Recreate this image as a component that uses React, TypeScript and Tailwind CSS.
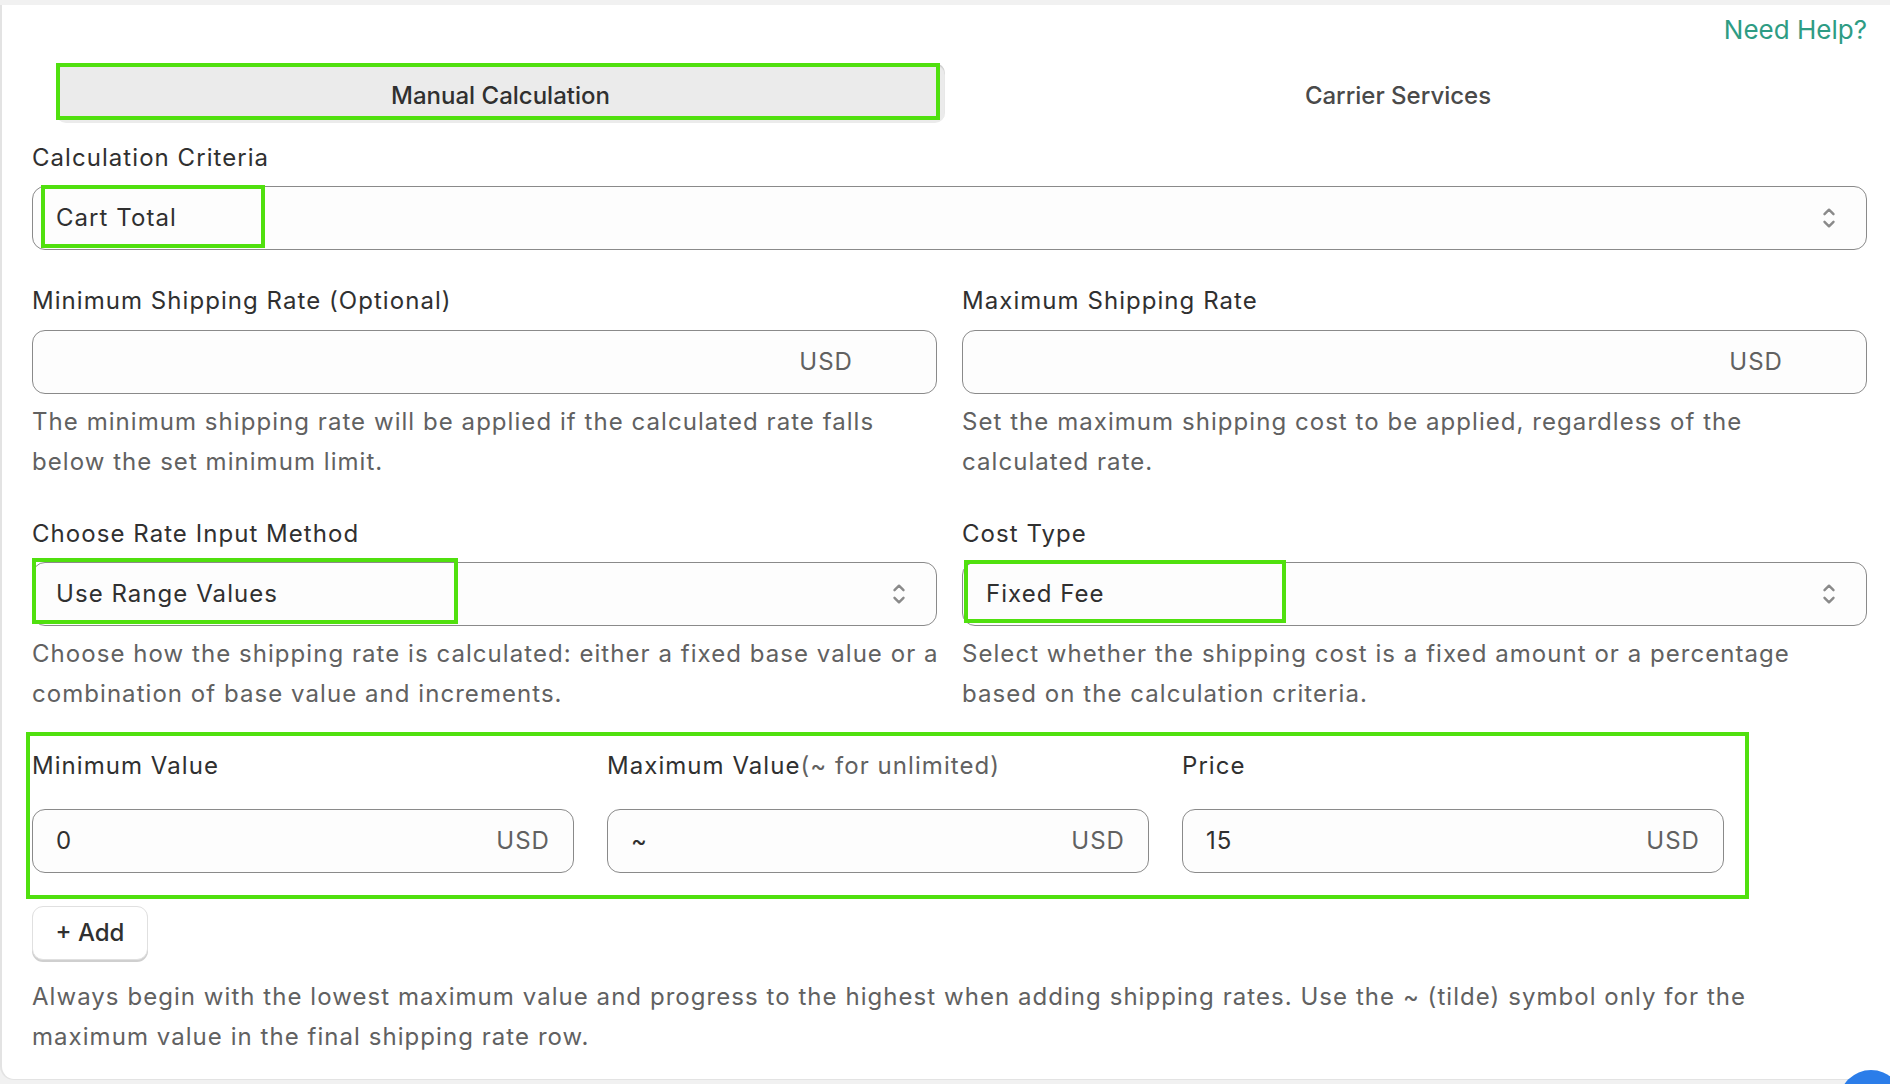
import { ReactNode } from "react";

function Chevrons() {
  return (
    <svg width="14" height="26" viewBox="0 0 14 26" fill="none" className="shrink-0">
      <path d="M2.5 9.2 L7 4.7 L11.5 9.2" stroke="#8a8a8a" strokeWidth="2.4" strokeLinecap="round" strokeLinejoin="round" />
      <path d="M2.5 16.8 L7 21.3 L11.5 16.8" stroke="#8a8a8a" strokeWidth="2.4" strokeLinecap="round" strokeLinejoin="round" />
    </svg>
  );
}

function Label({ children }: { children: ReactNode }) {
  return <p className="text-[24px] leading-[32px] tracking-[1.05px] text-[#303030]">{children}</p>;
}

function Help({ children }: { children: ReactNode }) {
  return <p className="mt-[8px] text-[24px] leading-[40px] tracking-[1.05px] text-[#616161]">{children}</p>;
}

function SelectBox({ value, mark }: { value: string; mark: string }) {
  return (
    <div className="relative mt-[12px] flex h-[64px] items-center justify-between rounded-[13px] border border-[#8a8a8a] bg-[#fdfdfd] pl-[23px] pr-[30px]">
      <span className="text-[24px] tracking-[1.05px] text-[#303030]">{value}</span>
      <Chevrons />
      {/* highlight box */}
      <div className={`pointer-events-none absolute border-4 border-[#50e00e] ${mark}`} />
    </div>
  );
}

function UsdInput({ value, wide }: { value?: string; wide?: boolean }) {
  return (
    <div
      className={`flex h-[64px] items-center justify-between rounded-[13px] border border-[#8a8a8a] bg-[#fdfdfd] pl-[23px] ${
        wide ? "mt-[13px] pr-[83px]" : "pr-[23px]"
      }`}
    >
      <span className="text-[24px] tracking-[1.05px] text-[#303030]">{value}</span>
      <span className="text-[24px] tracking-[1.05px] text-[#616161]">USD</span>
    </div>
  );
}

export default function App() {
  return (
    <div className="relative h-[1084px] overflow-hidden bg-[#f1f1f1] pt-[5px] font-['Inter',sans-serif]">
      <div className="h-[1075px] rounded-bl-[14px] border-b border-l-2 border-[#e3e3e3] bg-white pl-[30px] pr-[23px]">
        <div className="flex justify-end pt-[9px]">
          <a className="text-[26px] leading-[32px] text-[#2e9c84]">Need Help?</a>
        </div>

        <div className="mt-[17px] ml-[24px] mr-[16px] flex h-[60px]">
          <div className="relative flex w-[889px] items-center justify-center rounded-[10px] bg-[#ebebeb] pt-[5px] shadow-[inset_0_2px_1px_rgba(0,0,0,0.12)]">
            <span className="text-[24px] font-medium text-[#303030]">Manual Calculation</span>
            <div className="pointer-events-none absolute left-0 top-0 h-[57px] w-[884px] border-4 border-[#50e00e]" />
          </div>
          <div className="flex flex-1 items-center justify-center pt-[5px]">
            <span className="text-[24px] font-medium text-[#4a4a4a]">Carrier Services</span>
          </div>
        </div>

        <div className="mt-[19px]">
          <Label>Calculation Criteria</Label>
          <SelectBox value="Cart Total" mark="left-[8px] top-[-2px] h-[63px] w-[224px]" />
        </div>

        <div className="mt-[35px] grid grid-cols-2 gap-x-[25px]">
          <div>
            <Label>Minimum Shipping Rate (Optional)</Label>
            <UsdInput wide />
            <Help>
              The minimum shipping rate will be applied if the calculated rate falls
              <br />
              below the set minimum limit.
            </Help>
          </div>
          <div>
            <Label>Maximum Shipping Rate</Label>
            <UsdInput wide />
            <Help>
              Set the maximum shipping cost to be applied, regardless of the
              <br />
              calculated rate.
            </Help>
          </div>
        </div>

        <div className="mt-[36px] grid grid-cols-2 gap-x-[25px]">
          <div>
            <Label>Choose Rate Input Method</Label>
            <SelectBox value="Use Range Values" mark="left-[-1px] top-[-5px] h-[66px] w-[426px]" />
            <Help>
              <span className="whitespace-nowrap">
                Choose how the shipping rate is calculated: either a fixed base value or a
              </span>
              <br />
              combination of base value and increments.
            </Help>
          </div>
          <div>
            <Label>Cost Type</Label>
            <SelectBox value="Fixed Fee" mark="left-[1px] top-[-3px] h-[63px] w-[322px]" />
            <Help>
              Select whether the shipping cost is a fixed amount or a percentage
              <br />
              based on the calculation criteria.
            </Help>
          </div>
        </div>

        <div className="mt-[18px] -ml-[6px] w-[1723px] border-4 border-[#50e00e] pb-[22px] pl-[2px] pr-[21px] pt-[14px]">
          <div className="grid grid-cols-3 gap-x-[33px]">
            <div>
              <Label>Minimum Value</Label>
              <div className="mt-[27px]">
                <UsdInput value="0" />
              </div>
            </div>
            <div>
              <Label>
                Maximum Value<span className="text-[#616161]">(~ for unlimited)</span>
              </Label>
              <div className="mt-[27px]">
                <UsdInput value="~" />
              </div>
            </div>
            <div>
              <Label>Price</Label>
              <div className="mt-[27px]">
                <UsdInput value="15" />
              </div>
            </div>
          </div>
        </div>

        <button className="mt-[7px] h-[54px] w-[116px] rounded-[11px] border border-[#e0e0e0] bg-white text-[24px] font-medium text-[#303030] shadow-[0_2px_0_#cfcfcf]">
          + Add
        </button>

        <p className="mt-[17px] text-[24px] leading-[40px] tracking-[1.05px] text-[#616161]">
          Always begin with the lowest maximum value and progress to the highest when adding shipping rates. Use the ~
          (tilde) symbol only for the
          <br />
          maximum value in the final shipping rate row.
        </p>
      </div>

      <div className="absolute left-[1839px] top-[1070px] h-[64px] w-[64px] rounded-full bg-[#2b7de9]" />
    </div>
  );
}
